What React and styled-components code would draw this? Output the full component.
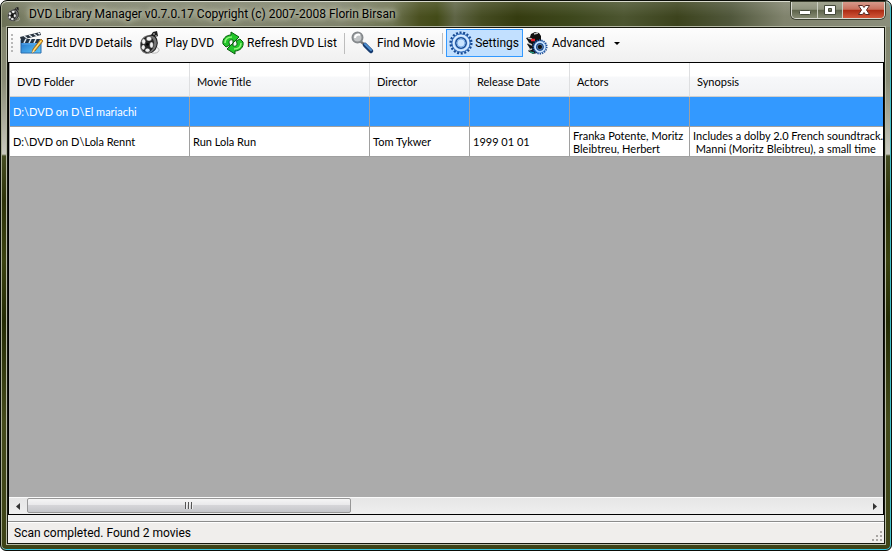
import React from "react";
import styled, { createGlobalStyle, css } from "styled-components";

const ui = `Roboto, "Open Sans", sans-serif`;
const gridFont = `Lato, "Liberation Sans", sans-serif`;

const Global = createGlobalStyle`
  * { box-sizing: border-box; }
  html, body, #root { height: 100%; }
  body { margin: 0; background: #fff; color: #000; font: 12px/16px ${ui}; overflow: hidden; }
  button { font: inherit; color: inherit; border: 0; background: none; padding: 0; margin: 0; }
`;

const Window = styled.div`
  height: 100%;
  display: flex;
  flex-direction: column;
  padding: 1px 6px 6px;
  border: 1px solid #0a0d08;
  border-radius: 7px 7px 6px 6px;
  background:
    linear-gradient(180deg, #ffffff22 0, transparent 60%) top / 100% 26px no-repeat,
    linear-gradient(90deg, #6b7055 0, #7e826a 4%, #80846c 38%, #6c7250 44%, #4a5020 47%, #434b18 49%, #5f6546 51%, #454c22 54%, #353c10 58%, #3d471c 64%, #4c5530 70%, #3c431d 76%, #50573b 82%, #80836d 88%, #8b8e7b 100%) top / 100% 26px no-repeat,
    linear-gradient(180deg, #7b7f66 0, #8a8c76 80px, #c9c8be 153px, #454c22 155px, #2d3208 200px, #3b4210 260px, #242b04 320px, #454b1c 420px, #3d4216 100%);
  box-shadow: inset 0 1px #d8dacd, inset 1px 0 #a6aa90, inset -1px 0 #41bcc8, inset 0 -1px #35c8e4;
`;

const TitleBar = styled.header`
  display: flex;
  align-items: center;
  height: 25px;
  flex: none;
  gap: 7px;
`;

const Title = styled.h1`
  flex: 1;
  margin: 0;
  padding-bottom: 2px;
  font: 12px/16px ${ui};
  white-space: nowrap;
  text-shadow: 0 0 5px #c8cbb8, 0 0 7px #c8cbb8, 0 0 9px #c4c7b2;
`;

const Caption = styled.div`
  display: flex;
  align-self: flex-start;
  height: 17px;
  border: 1px solid #d7d9d0;
  border-top: 0;
  border-radius: 0 0 5px 5px;
  box-shadow: 0 0 0 1px #3d4132;
  overflow: hidden;
`;

const CaptionButton = styled.button`
  display: grid;
  place-items: center;
  width: ${(p) => (p.$close ? 42 : 25)}px;
  border-left: ${(p) => (p.$first ? 0 : 1)}px solid #c9ccc0;
  background: ${(p) =>
    p.$close
      ? "linear-gradient(#d79a8b 0, #c9705c 46%, #ab2a12 50%, #d2573a 100%)"
      : "linear-gradient(#a2a591 0, #8f937e 46%, #5d634a 50%, #858a72 100%)"};
`;

const Client = styled.main`
  flex: 1;
  min-height: 0;
  display: flex;
  flex-direction: column;
  border: 1px solid #14160c;
  outline: 1px solid #b4b7a4;
  background: #f0f0f0;
`;

const Toolbar = styled.nav`
  display: flex;
  align-items: center;
  height: 34px;
  flex: none;
  padding: 0 3px 4px;
  background: linear-gradient(#fdfdfd, #f0f0f0);
`;

const Grip = styled.span`
  width: 2px;
  height: 18px;
  margin-right: 4px;
  background: repeating-linear-gradient(#b8b8b8 0 2px, transparent 2px 4px);
`;

const ToolButton = styled.button`
  display: flex;
  align-items: center;
  gap: 2px;
  height: 28px;
  padding: 0 3px 0 2px;
  border: 1px solid transparent;
  white-space: nowrap;
  ${(p) =>
    p.$active &&
    css`
      border-color: #3399ff;
      background: #c2e0ff;
    `}
`;

const Separator = styled.span`
  width: 1px;
  height: 21px;
  margin: 0 3px;
  background: #bdbdbd;
`;

const Arrow = styled.span`
  margin-left: 7px;
  border: 3px solid transparent;
  border-top-color: #000;
  border-bottom: 0;
`;

const GridPanel = styled.section`
  flex: 1;
  min-height: 0;
  display: flex;
  flex-direction: column;
  border: 1px solid #000;
  background: #ababab;
`;

const TableClip = styled.div`
  flex: 1;
  min-height: 0;
  padding-left: 1px;
  overflow: hidden;
`;

const Table = styled.table`
  width: 100%;
  table-layout: fixed;
  border-collapse: separate;
  border-spacing: 0;
  font: 11px/13px ${gridFont};
`;

const Column = styled.col`
  width: ${(p) => (p.$width ? `${p.$width}px` : "auto")};
`;

const HeadCell = styled.th`
  height: 34px;
  padding: 3px 7px 0;
  text-align: left;
  font-weight: normal;
  background: linear-gradient(#fff 0, #fff 40%, #f7f8fa 42%, #f1f2f4 100%);
  border-right: 1px solid #dedfe1;
  border-bottom: 1px solid #d0cfcd;
  &:last-child { border-right: 0; }
`;

const Cell = styled.td`
  height: 30px;
  padding: 0 0 0 3px;
  white-space: pre;
  border-right: 1px solid #a0a0a0;
  border-bottom: 1px solid #a0a0a0;
  color: ${(p) => (p.$selected ? "#fff" : "#000")};
  background: ${(p) => (p.$selected ? "#3399ff" : "#fff")};
  &:last-child { border-right: 0; }
`;

const ScrollBar = styled.div`
  display: flex;
  height: 17px;
  flex: none;
  border-top: 1px solid #fafafa;
  background: linear-gradient(#e6e6e6 0, #efefef 100%);
`;

const ScrollButton = styled.button`
  width: 17px;
  display: grid;
  place-items: center;
`;

const Track = styled.div`
  flex: 1;
  padding: 0 1px;
`;

const Thumb = styled.button`
  display: grid;
  place-items: center;
  width: calc(39% - 3px);
  height: 15px;
  border: 1px solid #979797;
  border-radius: 2px;
  background: linear-gradient(#f5f5f5 0, #e9e9eb 45%, #d5d5d8 50%, #c5c6ca 100%);
`;

const StatusBar = styled.footer`
  flex: none;
  display: flex;
  align-items: center;
  justify-content: space-between;
  height: 22px;
  margin-top: 6px;
  padding: 1px 2px 0 6px;
  border-top: 1px solid #8c8c8c;
  background: #f0eeec;
  box-shadow: inset 0 1px #fff;
`;

const SizeGrip = styled.svg`
  align-self: flex-end;
  margin-bottom: 2px;
`;

const ReelIcon = ({ size }) => (
  <svg width={size} height={size} viewBox="0 0 24 24" aria-hidden="true">
    <path d="M13 22c5 1 9-2 6-5-2-1-4 1-2 2" stroke="#b9b9b9" fill="none" />
    <path d="M12 4l2-3 4-1 1 5-2 1 1 4-4 1z" fill="#1d1d1d" />
    <path d="M14 3h2M16 5h2" stroke="#ccc" />
    <ellipse cx="11" cy="13" rx="7" ry="9" fill="#777" stroke="#1b1b1b" transform="rotate(18 11 13)" />
    <ellipse cx="8.500" cy="13.500" rx="7" ry="8.800" fill="#252525" stroke="#777" transform="rotate(14 8.500 13.500)" />
    <g fill="#f2f2f2" stroke="#111" strokeWidth=".4">
      <ellipse cx="10" cy="7.700" rx="2.700" ry="2.300" />
      <ellipse cx="4.700" cy="10.500" rx="2" ry="2.700" />
      <ellipse cx="4.300" cy="16.300" rx="1.900" ry="2.600" />
      <ellipse cx="8.500" cy="19.200" rx="2.500" ry="2" />
      <ellipse cx="12.500" cy="14" rx="1.900" ry="2.900" />
    </g>
    <circle cx="8.500" cy="13.300" r="1.400" fill="#050505" />
  </svg>
);

const ClapperIcon = () => (
  <svg width="24" height="24" viewBox="0 0 24 24" aria-hidden="true">
    <defs>
      <linearGradient id="slate" x1="0" y1="0" x2="1" y2="1">
        <stop offset="0" stopColor="#1c6cc8" />
        <stop offset="1" stopColor="#5fc9fa" />
      </linearGradient>
    </defs>
    <path d="M0 6L20 1l1 3L1 9z" fill="#26313d" />
    <path d="M4 5l3 2M9 4l3 2M14 3l3 2M18 2l2 1" stroke="#dfe8ef" strokeWidth="1.500" />
    <path d="M1 9h20v13H1z" fill="url(#slate)" stroke="#2a6cae" />
    <path d="M1 8h20v4H1z" fill="#223345" />
    <path d="M4 12l2-4M9 12l2-4M14 12l2-4M19 12l2-4" stroke="#dce8f2" strokeWidth="1.500" />
    <path d="M2 13h18" stroke="#5fabee" />
    <path d="M12 22l1-4 8-10 2 2-8 10z" fill="#f6b72d" stroke="#8c5a16" strokeWidth=".8" />
    <path d="M14 19l7-9" stroke="#ffe69a" />
    <path d="M12 22l1-3 2 1z" fill="#fff0bf" />
  </svg>
);

const RefreshIcon = () => (
  <svg width="24" height="24" viewBox="0 0 24 24" aria-hidden="true">
    <g fill="#22c62a" stroke="#075d0c" strokeLinejoin="round">
      <path d="M5 16L2 13C1 8 5 4 10 4V1l8 5-6 6V9C8 8 7 11 9 14l-4 2z" />
      <path d="M19 8l3 3c1 5-3 9-8 9v3l-8-5 6-6v3c4 1 5-2 3-5l4-2z" />
    </g>
    <path d="M4 12c0-4 3-6 7-6M20 12c0 4-3 6-7 6" stroke="#93f47c" strokeWidth="1.500" fill="none" />
  </svg>
);

const SearchIcon = () => (
  <svg width="24" height="24" viewBox="0 0 24 24" aria-hidden="true">
    <path d="M9 10l5 4" stroke="#777" strokeWidth="2.500" />
    <path d="M14 14l6 6" stroke="#173c70" strokeWidth="4.500" strokeLinecap="round" />
    <path d="M14 13l6 6" stroke="#4f8fd0" strokeWidth="2" strokeLinecap="round" />
    <circle cx="6.500" cy="6.500" r="5" fill="#c3c6c8" stroke="#85898c" strokeWidth="2" />
    <path d="M4 7c0-3 3-4 5-3" stroke="#fff" strokeWidth="2" fill="none" />
  </svg>
);

const GearShape = ({ fill }) => (
  <g>
    <circle cx="12" cy="12" r="10.300" fill="none" stroke="#174a94" strokeWidth="2.500" strokeDasharray="2 1.596" />
    <circle cx="12" cy="12" r="9.200" fill="#a9d0fa" stroke="#245cab" />
    <circle cx="12" cy="12" r="7.500" fill="none" stroke="#dcedff" strokeWidth="1.500" />
    <circle cx="12" cy="12" r="5.200" fill={fill} stroke="#174a94" strokeWidth="1.500" />
    <circle cx="12" cy="12" r="4" fill="none" stroke="#78aae4" />
  </g>
);

const GearIcon = () => (
  <svg width="24" height="24" viewBox="0 0 24 24" aria-hidden="true">
    <GearShape fill="#c9e4ff" />
  </svg>
);

const AdvancedIcon = () => (
  <svg width="24" height="24" viewBox="0 0 24 24" aria-hidden="true">
    <path d="M5 3l4-2 4 1 2 3v8l-4 9-4 1-5-3 2-2-1-2-2-3 2-1-1-2-2-3 4-1z" fill="#111" />
    <path d="M2 7l4 1M2 12l4 2M3 19l3-1M8 3l4-1" stroke="#c7c7c7" strokeWidth="1.500" />
    <path d="M5 9h4" stroke="#e71f2b" strokeWidth="2.500" />
    <path d="M4 21l4 1" stroke="#2b9b83" strokeWidth="1.500" />
    <g transform="translate(6 8) scale(.66)">
      <GearShape fill="#111" />
    </g>
  </svg>
);

const MinimizeIcon = () => (
  <svg width="14" height="12" viewBox="0 0 14 12" aria-hidden="true">
    <rect x="1.500" y="6.500" width="11" height="4" rx="1" fill="#fff" stroke="#454a3a" />
  </svg>
);

const MaximizeIcon = () => (
  <svg width="14" height="12" viewBox="0 0 14 12" aria-hidden="true">
    <path d="M1.500 1.500h11v9h-11zM5.500 4.500v3h3v-3z" fill="#fff" fillRule="evenodd" stroke="#454a3a" />
  </svg>
);

const CloseIcon = () => (
  <svg width="14" height="12" viewBox="0 0 14 12" aria-hidden="true">
    <path d="M1.500 1.500h4L7 3.500l1.500-2h4L9.500 6l3 4.500h-4L7 8.500l-1.500 2h-4l3-4.500z" fill="#fff" stroke="#5b2a22" />
  </svg>
);

const columns = [
  ["DVD Folder", 180],
  ["Movie Title", 180],
  ["Director", 100],
  ["Release Date", 100],
  ["Actors", 120],
  ["Synopsis", 0],
];

const rows = [
  ["D:\\DVD on D\\El mariachi", "", "", "", "", ""],
  [
    "D:\\DVD on D\\Lola Rennt",
    "Run Lola Run",
    "Tom Tykwer",
    "1999 01 01",
    "Franka Potente, Moritz\nBleibtreu, Herbert",
    "Includes a dolby 2.0 French soundtrack.\n Manni (Moritz Bleibtreu), a small time",
  ],
];

const gripDots = [[8, 0], [4, 4], [8, 4], [0, 8], [4, 8], [8, 8]];

export default function App() {
  return (
    <Window>
      <Global />
      <TitleBar>
        <ReelIcon size={15} />
        <Title>DVD Library Manager v0.7.0.17 Copyright (c) 2007-2008 Florin Birsan</Title>
        <Caption>
          <CaptionButton $first aria-label="Minimize"><MinimizeIcon /></CaptionButton>
          <CaptionButton aria-label="Maximize"><MaximizeIcon /></CaptionButton>
          <CaptionButton $close aria-label="Close"><CloseIcon /></CaptionButton>
        </Caption>
      </TitleBar>
      <Client>
        <Toolbar aria-label="Main">
          <Grip />
          <ToolButton><ClapperIcon />Edit DVD Details</ToolButton>
          <ToolButton><ReelIcon size={24} />Play DVD</ToolButton>
          <ToolButton><RefreshIcon />Refresh DVD List</ToolButton>
          <Separator />
          <ToolButton><SearchIcon />Find Movie</ToolButton>
          <Separator />
          <ToolButton $active><GearIcon />Settings</ToolButton>
          <ToolButton aria-haspopup="menu"><AdvancedIcon />Advanced<Arrow /></ToolButton>
        </Toolbar>
        <GridPanel>
          <TableClip>
            <Table>
              <colgroup>
                {columns.map(([name, width]) => <Column key={name} $width={width} />)}
              </colgroup>
              <thead>
                <tr>{columns.map(([name]) => <HeadCell key={name} scope="col">{name}</HeadCell>)}</tr>
              </thead>
              <tbody>
                {rows.map((row, i) => (
                  <tr key={row[0]} aria-selected={i === 0}>
                    {row.map((text, j) => <Cell key={columns[j][0]} $selected={i === 0}>{text}</Cell>)}
                  </tr>
                ))}
              </tbody>
            </Table>
          </TableClip>
          <ScrollBar>
            <ScrollButton aria-label="Scroll left">
              <svg width="4" height="7" viewBox="0 0 4 7" aria-hidden="true"><path d="M4 0v7L0 3.500z" fill="#333" /></svg>
            </ScrollButton>
            <Track>
              <Thumb aria-label="Scroll position">
                <svg width="8" height="7" viewBox="0 0 8 7" aria-hidden="true">
                  <path d="M.5 0v7M3.500 0v7M6.500 0v7" stroke="#555" />
                  <path d="M1.500 0v7M4.500 0v7M7.500 0v7" stroke="#eee" />
                </svg>
              </Thumb>
            </Track>
            <ScrollButton aria-label="Scroll right">
              <svg width="4" height="7" viewBox="0 0 4 7" aria-hidden="true"><path d="M0 0v7l4-3.500z" fill="#333" /></svg>
            </ScrollButton>
          </ScrollBar>
        </GridPanel>
        <StatusBar>
          Scan completed. Found 2 movies
          <SizeGrip width="10" height="10" viewBox="0 0 10 10" aria-hidden="true">
            {gripDots.map(([x, y]) => <rect key={`${x}-${y}`} x={x} y={y} width="2" height="2" fill="#a8a5a2" />)}
          </SizeGrip>
        </StatusBar>
      </Client>
    </Window>
  );
}
